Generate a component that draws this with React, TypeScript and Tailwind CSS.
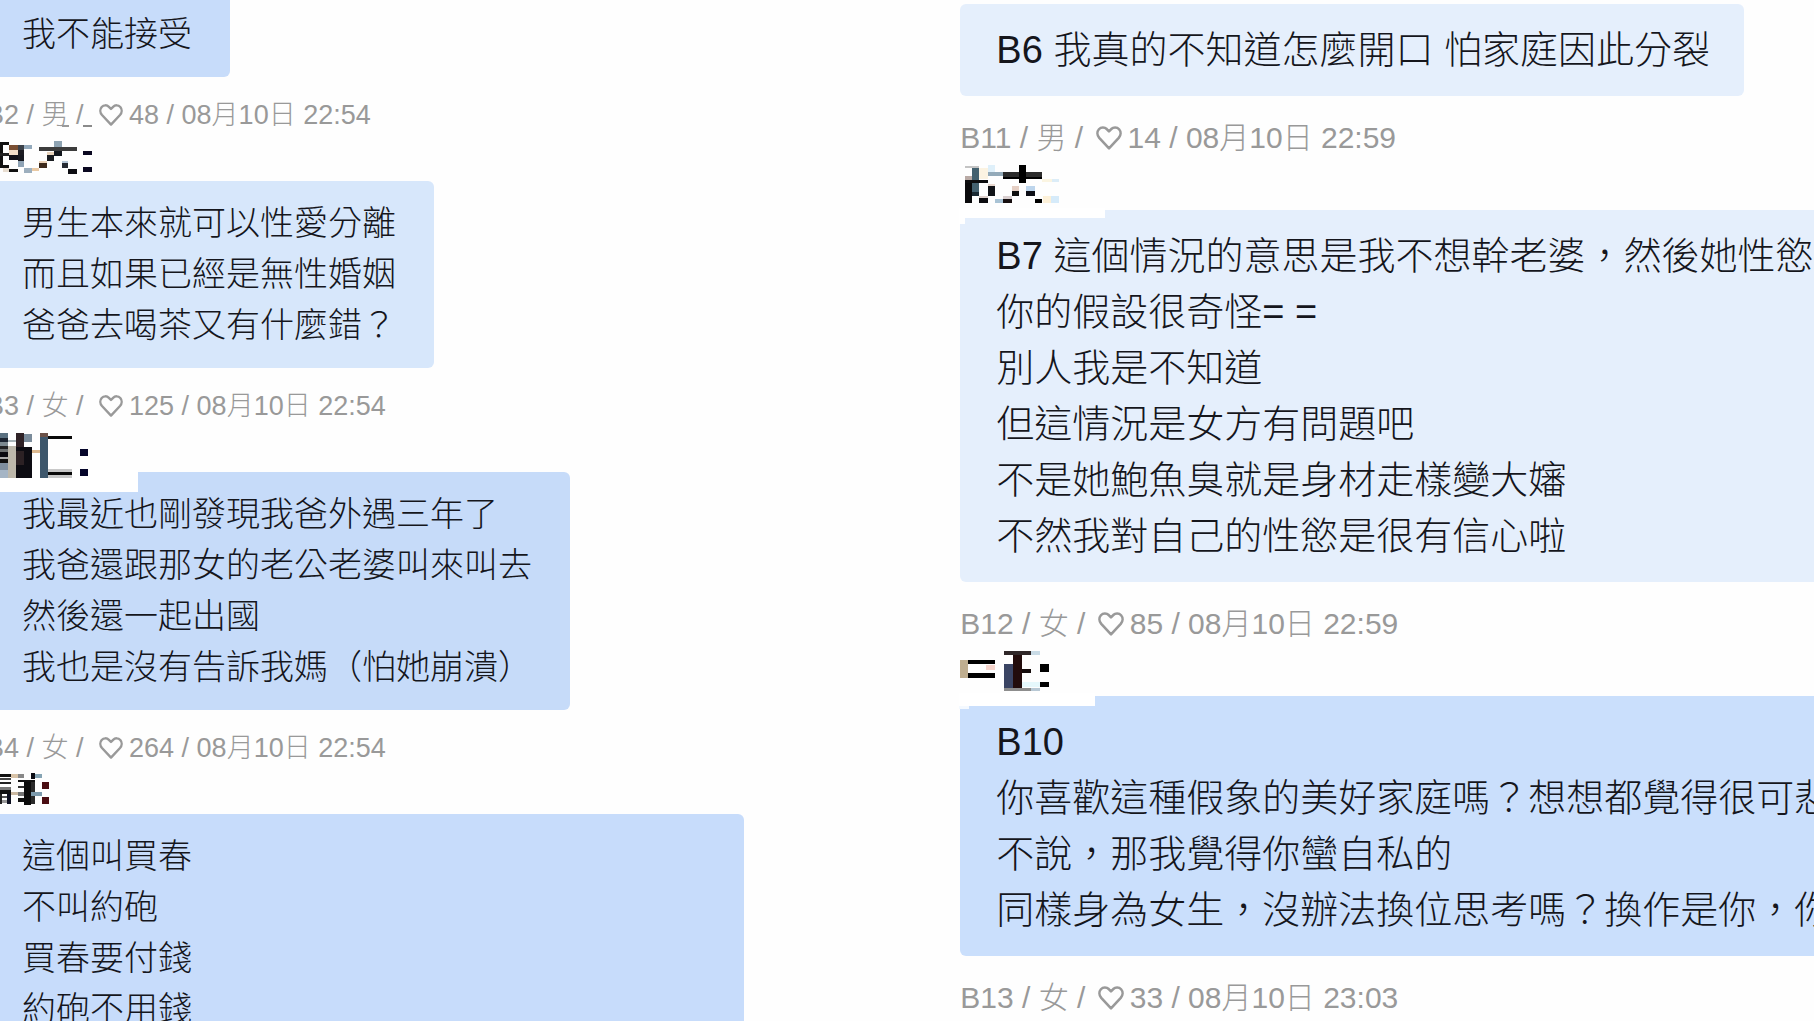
import clsx from 'clsx';

type Block = [x: number, y: number, w: number, h: number, fill: string];

interface School {
  viewBox: string;
  blocks: Block[];
}

interface Post {
  floor?: string;
  gender?: string;
  likes?: number;
  time?: string;
  school?: School;
  lines?: string[];
  bubble?: string;
}

// Censored school names, three units to a pixel
const schoolA: School = {
  viewBox: '-42 15 330 138',
  blocks: [
    [187, -14, 20, 6, '#999999'], [249, -14, 26, 6, '#8a8a8a'],
    [0, 36, 27, 8, '#111111'], [0, 44, 8, 62, '#111111'], [0, 70, 30, 8, '#222222'], [0, 104, 27, 9, '#111111'],
    [27, 46, 26, 14, '#7a4f33'], [53, 46, 18, 14, '#3a4048'], [71, 46, 26, 10, '#93a9bb'],
    [27, 60, 26, 14, '#f0dcc8'], [53, 60, 20, 16, '#1c1c22'], [27, 76, 26, 14, '#101018'],
    [53, 76, 20, 18, '#16181f'], [53, 94, 20, 18, '#8fa3b5'], [27, 117, 27, 9, '#111111'],
    [8, 113, 19, 12, '#e8ddd0'], [73, 115, 24, 15, '#9dafbe'], [97, 115, 20, 9, '#e9c9a4'],
    [162, 32, 24, 20, '#8ea3b2'], [117, 52, 113, 10, '#3c3c3c'], [162, 62, 24, 16, '#12161d'],
    [142, 66, 20, 9, '#e8d3bb'], [142, 75, 20, 18, '#1a1d22'], [117, 92, 24, 8, '#ead2b8'],
    [117, 100, 24, 14, '#3d2a1c'], [186, 92, 18, 8, '#b5c6d6'], [186, 100, 18, 14, '#262b33'],
    [204, 116, 26, 15, '#0d0d12'], [249, 62, 26, 14, '#0a0820'], [249, 111, 26, 14, '#0a0820'],
  ],
};

const schoolB: School = {
  viewBox: '-42 18 330 138',
  blocks: [
    [-42, 150, 455, 65, '#ffffff'],
    [0, 38, 24, 16, '#5a7080'], [0, 54, 24, 12, '#1c2430'], [0, 66, 24, 12, '#7d8a90'], [0, 78, 24, 10, '#222222'],
    [0, 88, 24, 8, '#6b6f70'], [0, 96, 24, 14, '#0a0a10'], [0, 110, 24, 8, '#aaaaaa'], [0, 118, 24, 10, '#111111'],
    [0, 128, 24, 22, '#7f8f9f'], [0, 150, 24, 24, '#a5b5c5'], [24, 60, 24, 6, '#a8b4b8'], [24, 78, 24, 96, '#bdb8ab'],
    [48, 38, 24, 42, '#2f2226'], [72, 42, 24, 24, '#7a8b9a'], [48, 80, 48, 94, '#0d0c12'], [48, 94, 24, 40, '#2c2124'],
    [96, 90, 24, 8, '#dcb990'], [120, 38, 25, 12, '#6b5148'], [120, 50, 25, 124, '#3d566b'],
    [145, 48, 70, 10, '#0a0a0a'], [145, 148, 70, 8, '#c8c8c8'], [145, 156, 70, 10, '#0a0a0a'], [145, 166, 70, 8, '#c8c8c8'],
    [240, 87, 24, 20, '#05052a'], [240, 147, 24, 20, '#05052a'],
  ],
};

const schoolC: School = {
  viewBox: '-42 9 330 138',
  blocks: [
    [0, 26, 33, 10, '#111111'], [0, 40, 33, 6, '#444444'], [0, 52, 33, 6, '#222222'], [0, 66, 33, 10, '#777777'],
    [0, 76, 33, 10, '#111111'], [20, 86, 13, 32, '#0d1020'], [0, 86, 6, 32, '#222222'], [6, 92, 14, 8, '#555555'],
    [6, 106, 14, 8, '#999999'], [33, 28, 20, 10, '#d8c3a8'], [53, 28, 20, 10, '#888888'], [92, 24, 14, 18, '#0b0b12'],
    [106, 28, 20, 10, '#86a4b4'], [53, 44, 53, 8, '#111111'], [72, 52, 20, 68, '#0c0c0c'], [92, 52, 14, 64, '#2a2a2a'],
    [53, 62, 20, 8, '#333333'], [33, 80, 20, 10, '#cbb9a2'], [53, 80, 20, 12, '#777777'], [92, 80, 34, 12, '#7c9aac'],
    [53, 100, 20, 12, '#111111'], [126, 50, 20, 22, '#4a0d12'], [126, 96, 20, 20, '#4a0d12'],
  ],
};

const schoolD: School = {
  viewBox: '30 9 330 156',
  blocks: [
    [28, 160, 437, 28, '#ffffff'], [28, 188, 16, 20, '#ffffff'],
    [44, 32, 44, 8, '#c4c4c4'], [66, 40, 22, 72, '#44616f'], [88, 40, 26, 32, '#fbf3e2'], [44, 64, 22, 10, '#b9aaa5'],
    [44, 74, 70, 10, '#0e0e10'], [44, 84, 22, 60, '#0a0a0c'], [66, 112, 22, 12, '#1a2a33'], [88, 122, 26, 8, '#ddd0cc'],
    [88, 130, 26, 14, '#0c0c10'], [114, 30, 22, 20, '#dff0fa'], [114, 52, 44, 10, '#93aab9'], [114, 86, 22, 8, '#e9d9d0'],
    [114, 94, 22, 30, '#111318'], [136, 132, 22, 12, '#a9c3d5'], [158, 52, 118, 14, '#2b2b2b'], [158, 66, 118, 6, '#000000'],
    [206, 30, 22, 54, '#000000'], [186, 94, 20, 14, '#e5cfc4'], [186, 108, 20, 14, '#0f0f0f'], [158, 122, 27, 10, '#d9cfd0'],
    [158, 132, 27, 12, '#170f10'], [228, 94, 27, 14, '#bdd5ec'], [228, 108, 27, 14, '#0c0e16'], [255, 132, 22, 12, '#000000'],
    [276, 72, 30, 8, '#fbf5e2'], [306, 72, 20, 8, '#dcedf8'], [280, 122, 22, 22, '#fdf1d9'], [302, 122, 24, 22, '#d6ebfa'],
  ],
};

const schoolE: School = {
  viewBox: '60 12 330 156',
  blocks: [
    [58, 160, 407, 37, '#ffffff'], [58, 197, 28, 9, '#f4f9ff'],
    [60, 60, 24, 54, '#bfae90'], [84, 60, 82, 12, '#000000'], [138, 76, 28, 14, '#f6d4cc'], [84, 98, 82, 16, '#000000'],
    [193, 33, 80, 11, '#2f2728'], [273, 33, 27, 11, '#c9dbe6'], [193, 72, 27, 71, '#3a4463'], [220, 44, 26, 99, '#220c0c'],
    [246, 86, 28, 12, '#150c0c'], [246, 125, 54, 16, '#e6f8fc'], [193, 143, 80, 9, '#8d8d8d'], [273, 143, 27, 9, '#b8c8d4'],
    [301, 72, 27, 25, '#000000'], [301, 126, 27, 15, '#000000'],
  ],
};

const leftPosts: Post[] = [
  { lines: ['我不能接受'], bubble: 'bg-[#c7dcfa]' },
  {
    floor: 'B2',
    gender: '男',
    likes: 48,
    time: '08月10日 22:54',
    school: schoolA,
    lines: ['男生本來就可以性愛分離', '而且如果已經是無性婚姻', '爸爸去喝茶又有什麼錯？'],
    bubble: 'bg-[#d7e7fb]',
  },
  {
    floor: 'B3',
    gender: '女',
    likes: 125,
    time: '08月10日 22:54',
    school: schoolB,
    lines: ['我最近也剛發現我爸外遇三年了', '我爸還跟那女的老公老婆叫來叫去', '然後還一起出國', '我也是沒有告訴我媽（怕她崩潰）'],
    bubble: 'bg-[#c6dbf9]',
  },
  {
    floor: 'B4',
    gender: '女',
    likes: 264,
    time: '08月10日 22:54',
    school: schoolC,
    lines: ['這個叫買春', '不叫約砲', '買春要付錢', '約砲不用錢'],
    bubble: 'bg-[#c7dcfb] w-[758px]',
  },
];

const rightPosts: Post[] = [
  { lines: ['B6 我真的不知道怎麼開口 怕家庭因此分裂'], bubble: 'bg-[#e5effc]' },
  {
    floor: 'B11',
    gender: '男',
    likes: 14,
    time: '08月10日 22:59',
    school: schoolD,
    lines: [
      'B7 這個情況的意思是我不想幹老婆，然後她性慾很',
      '你的假設很奇怪= =',
      '別人我是不知道',
      '但這情況是女方有問題吧',
      '不是她鮑魚臭就是身材走樣變大嬸',
      '不然我對自己的性慾是很有信心啦',
    ],
    bubble: 'bg-[#e5effc] min-w-full rounded-r-none',
  },
  {
    floor: 'B12',
    gender: '女',
    likes: 85,
    time: '08月10日 22:59',
    school: schoolE,
    lines: ['B10', '你喜歡這種假象的美好家庭嗎？想想都覺得很可悲', '不說，那我覺得你蠻自私的', '同樣身為女生，沒辦法換位思考嗎？換作是你，你'],
    bubble: 'bg-[#cadffc] min-w-full rounded-r-none',
  },
  { floor: 'B13', gender: '女', likes: 33, time: '08月10日 23:03' },
];

function HeartOutline({ className }: { className?: string }) {
  return (
    <svg viewBox="0 0 24 22" className={className} fill="none" stroke="currentColor" strokeWidth="2.4" strokeLinejoin="round" aria-hidden="true">
      <path d="M12 20.6 L3 11 C0.9 8.6 0.8 5.2 2.7 3 C4.7 0.8 7.9 0.8 9.9 2.8 L12 5 L14.1 2.8 C16.1 0.8 19.3 0.8 21.3 3 C23.2 5.2 23.1 8.6 21 11 Z" />
    </svg>
  );
}

function SchoolName({ school, large }: { school: School; large: boolean }) {
  return (
    <svg
      viewBox={school.viewBox}
      className={clsx('relative z-10 block w-[110px] overflow-visible', large ? 'h-[52px]' : 'h-[46px]')}
      shapeRendering="crispEdges"
      aria-hidden="true"
    >
      {school.blocks.map(([x, y, w, h, fill], i) => (
        <rect key={i} x={x} y={y} width={w} height={h} fill={fill} />
      ))}
    </svg>
  );
}

function PostItem({ post, large = false }: { post: Post; large?: boolean }) {
  return (
    <article className="flex flex-col items-start">
      {post.floor && (
        <header className={clsx('text-[#999999]', large ? 'pt-[22px] text-[30px]' : 'pt-[18px] text-[27px]')}>
          <div className="flex h-10 items-center whitespace-pre leading-10">
            <span>{`${post.floor} / ${post.gender} / `}</span>
            <HeartOutline className={clsx('mr-1.5 shrink-0', large ? 'ml-1 w-[26px]' : 'ml-2 w-6')} />
            <span>{`${post.likes} / ${post.time}`}</span>
          </div>
          {post.school && <SchoolName school={post.school} large={large} />}
        </header>
      )}
      {post.lines && (
        <div
          className={clsx(
            'whitespace-nowrap rounded-md pl-9 text-[#15161c]',
            large ? 'py-[18px] pr-[34px] text-[38px] leading-[56px]' : 'py-[17px] pr-[38px] text-[34px] leading-[51px]',
            post.bubble,
          )}
        >
          {post.lines.map((line) => (
            <p key={line}>{line}</p>
          ))}
        </div>
      )}
    </article>
  );
}

export default function App() {
  return (
    <main
      lang="zh-Hant"
      className="grid h-screen grid-cols-[9fr_8fr] overflow-hidden bg-[#fefefe] font-['Liberation_Sans','Noto_Sans_CJK_TC',sans-serif] font-light"
    >
      <section className="-ml-[14px] -mt-2 min-w-0">
        {leftPosts.map((post, i) => (
          <PostItem key={i} post={post} />
        ))}
      </section>
      <section className="min-w-0 pt-1">
        {rightPosts.map((post, i) => (
          <PostItem key={i} post={post} large />
        ))}
      </section>
    </main>
  );
}
